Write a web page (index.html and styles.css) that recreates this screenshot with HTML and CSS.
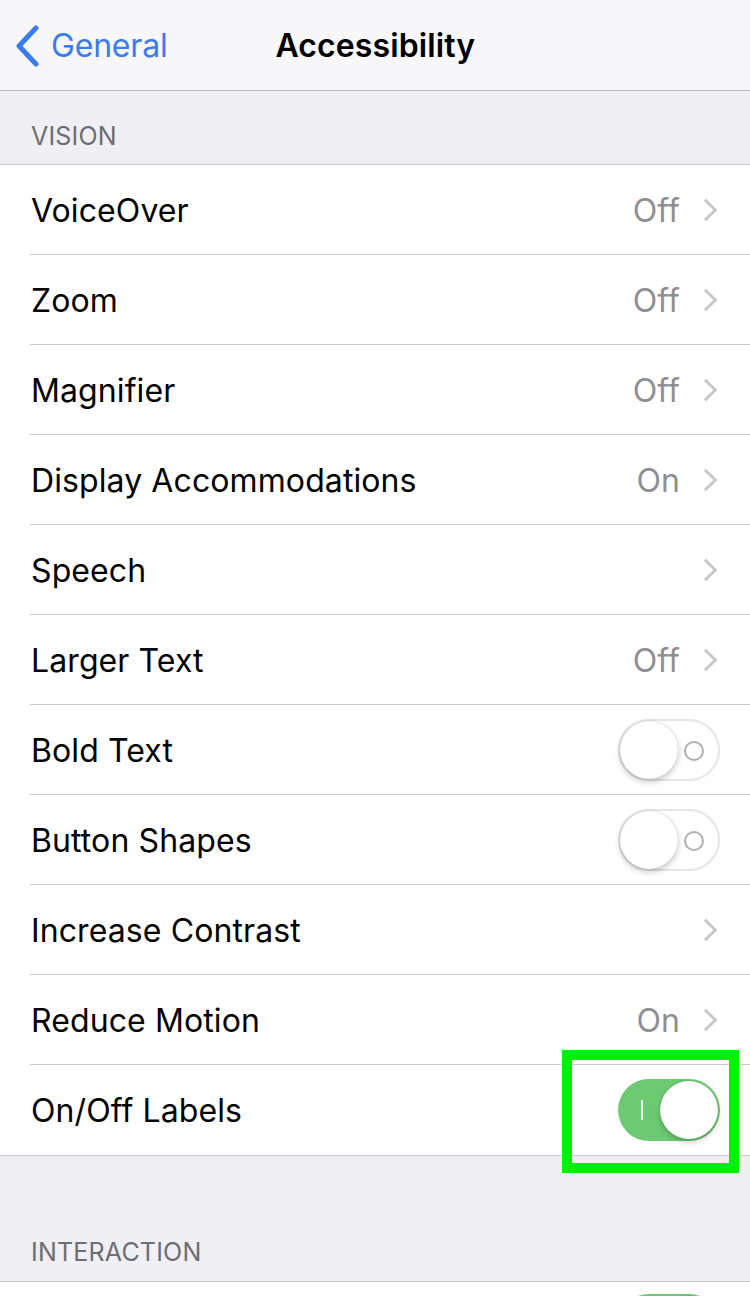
FILE: index.html
```html
<!DOCTYPE html>
<html>
<head>
<meta charset="utf-8">
<link rel="stylesheet" href="styles.css">
</head>
<body>
<div class="screen">
  <header class="nav">
    <div class="back">
      <svg class="back-chev" width="26" height="42" viewBox="0 0 26 42"><path d="M22 3 L5 21 L22 39" fill="none" stroke="#3b7bf0" stroke-width="5" stroke-linecap="round" stroke-linejoin="round"/></svg>
      <span class="back-label">General</span>
    </div>
    <div class="title">Accessibility</div>
  </header>

  <div class="section-head first"><span>VISION</span></div>
  <ul class="group">
    <li class="row"><span class="label">VoiceOver</span><span class="value">Off</span><span class="chev"></span></li>
    <li class="row"><span class="label">Zoom</span><span class="value">Off</span><span class="chev"></span></li>
    <li class="row"><span class="label">Magnifier</span><span class="value">Off</span><span class="chev"></span></li>
    <li class="row"><span class="label">Display Accommodations</span><span class="value">On</span><span class="chev"></span></li>
    <li class="row"><span class="label">Speech</span><span class="chev"></span></li>
    <li class="row"><span class="label">Larger Text</span><span class="value">Off</span><span class="chev"></span></li>
    <li class="row"><span class="label">Bold Text</span><span class="toggle off"><span class="o-mark"></span><span class="knob"></span></span></li>
    <li class="row"><span class="label">Button Shapes</span><span class="toggle off"><span class="o-mark"></span><span class="knob"></span></span></li>
    <li class="row"><span class="label">Increase Contrast</span><span class="chev"></span></li>
    <li class="row"><span class="label">Reduce Motion</span><span class="value">On</span><span class="chev"></span></li>
    <li class="row last"><span class="label">On/Off Labels</span><span class="toggle on"><span class="i-mark"></span><span class="knob"></span><span class="highlight"></span></span></li>
  </ul>

  <div class="section-head tall"><span>INTERACTION</span></div>
  <ul class="group">
    <li class="row"><span class="label"></span><span class="toggle on peek"><span class="knob"></span></span></li>
  </ul>
</div>
</body>
</html>
```

FILE: styles.css
```css
* { box-sizing: border-box; margin: 0; padding: 0; }
html, body { width: 750px; height: 1296px; overflow: hidden; }
body { background: #efeff4; font-family: Inter, "Noto Sans", sans-serif; -webkit-font-smoothing: antialiased; }
.screen { width: 750px; height: 1296px; overflow: hidden; display: flex; flex-direction: column; }

.nav {
  height: 91px; flex: none; background: #f7f7f9; border-bottom: 1px solid #b8b8bc;
  display: flex; align-items: center; position: relative;
}
.back { display: flex; align-items: center; padding-left: 14px; gap: 11px; }
.back-chev { display: block; margin-top: 1px; }
.back-label { color: #3b7bf0; font-size: 32px; letter-spacing: -0.2px; }
.title {
  margin-left: 108px; font-size: 32px; font-weight: 600; color: #000; letter-spacing: 0.1px;
}

.section-head {
  height: 74px; flex: none; display: flex; align-items: flex-end; padding: 0 0 13px 31px;
  color: #6d6d72; font-size: 25px; letter-spacing: 0.2px; border-bottom: 1px solid #c8c7cc;
}
.section-head.tall { height: 127px; padding-bottom: 14px; border-top: 1px solid #c8c7cc; }

.group { list-style: none; background: #fff; flex: none; }
.row {
  height: 90px; display: flex; align-items: center; padding-left: 31px; padding-right: 30px;
  position: relative;
}
.row::after {
  content: ""; position: absolute; left: 30px; right: 0; bottom: 0; height: 1px; background: #c8c7cc;
}
.row.last::after { display: none; }
.label { flex: 1; font-size: 32px; color: #000; letter-spacing: 0.1px; }
.value { font-size: 32px; color: #8e8e93; margin-right: 18px; letter-spacing: 0.1px; }
.chev {
  width: 16px; height: 16px; border-right: 3px solid #c7c7cc; border-top: 3px solid #c7c7cc;
  transform: rotate(45deg); margin-right: 6px;
}

.toggle {
  position: relative; width: 102px; height: 62px; border-radius: 31px; flex: none;
}
.toggle.off { background: #fff; border: 2px solid #e5e5ea; }
.toggle.on { background: #6ccb72; }
.knob {
  position: absolute; top: 2px; width: 58px; height: 58px; border-radius: 50%; background: #fff;
  box-shadow: 0 3px 6px rgba(0,0,0,0.22), 0 0 1px rgba(0,0,0,0.25);
}
.toggle.off .knob { left: 0; top: 0; }
.toggle.on .knob { right: 2px; }
.o-mark {
  position: absolute; right: 14px; top: 20px; width: 20px; height: 20px; border-radius: 50%;
  border: 2px solid #b0b0b4;
}
.i-mark {
  position: absolute; left: 23px; top: 21px; width: 2px; height: 20px; background: #fff;
}
.highlight {
  position: absolute; left: -56px; top: -29px; width: 177px; height: 123px;
  border: 10px solid #00f000;
}
.toggle.peek { align-self: flex-start; margin-top: 12px; }
```
